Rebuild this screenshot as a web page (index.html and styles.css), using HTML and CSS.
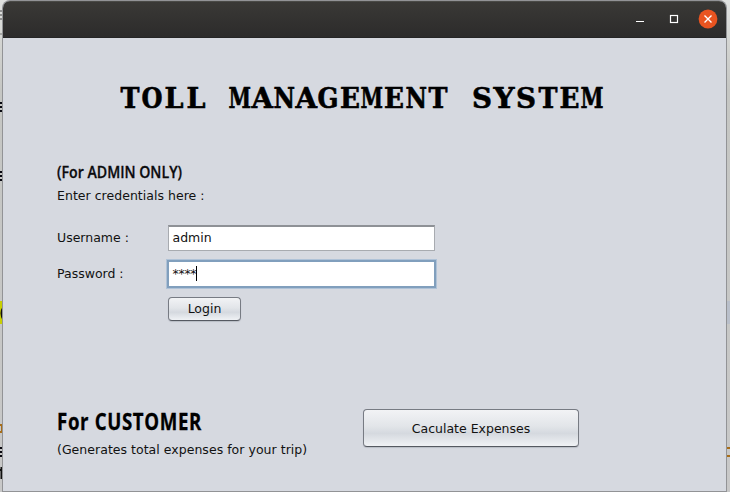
FILE: index.html
```
<!DOCTYPE html>
<html lang="en">
<head>
<meta charset="utf-8">
<title>Toll Management System</title>
<link rel="stylesheet" href="styles.css">
</head>
<body>
<div class="desktop">
  <svg class="behind" width="730" height="492" aria-hidden="true">
    <rect x="0" y="301" width="4" height="23" fill="#c8cf00"/>
    <rect x="726" y="301" width="4" height="23" fill="#b9bfca"/>
    <path d="M0 11H3M0 15H3M0 19H3" stroke="#777" stroke-width="1.3"/>
    <path d="M0 34H3" stroke="#777"/>
    <path d="M0 103H3M0 107H3M0 111H3M0 172H3M0 176H3M0 180H3M0 448H3M0 452H3M0 456H3" stroke="#080810" stroke-width="2"/>
    <path d="M4 307Q0 313 4 320" fill="none" stroke="#111" stroke-width="3"/>
    <path d="M0 425H2V432H0M730 448H726M730 456H726" fill="none" stroke="#a86d18" stroke-width="2"/>
    <path d="M1.5 467V479M0 470H3" stroke="#111" stroke-width="2"/>
  </svg>
  <main class="window">
    <header class="titlebar">
      <svg width="90" height="37" viewBox="0 0 90 37" fill="none">
        <path d="M3 20.5H11" stroke="#fff" stroke-width="1.2"/>
        <rect x="37.5" y="14.5" width="7" height="7" stroke="#fff" stroke-width="1.2"/>
        <circle cx="75" cy="18" r="9.4" fill="#e95420"/>
        <path d="M71.5 14.5L78.5 21.5M78.5 14.5L71.5 21.5" stroke="#fff" stroke-width="1.4"/>
      </svg>
    </header>
    <section class="content">
      <h1><svg width="500" height="40"><text class="title" y="32.5"><tspan x="0.5" textLength="19" lengthAdjust="spacingAndGlyphs">T</tspan><tspan x="21.5" textLength="21" lengthAdjust="spacingAndGlyphs">O</tspan><tspan x="44.5" textLength="19" lengthAdjust="spacingAndGlyphs">L</tspan><tspan x="66.5" textLength="19" lengthAdjust="spacingAndGlyphs">L</tspan> <tspan x="108.5" textLength="22.5" lengthAdjust="spacingAndGlyphs">M</tspan><tspan x="131.5" textLength="21.5" lengthAdjust="spacingAndGlyphs">A</tspan><tspan x="153.5" textLength="21.5" lengthAdjust="spacingAndGlyphs">N</tspan><tspan x="175.5" textLength="21.5" lengthAdjust="spacingAndGlyphs">A</tspan><tspan x="197.5" textLength="21" lengthAdjust="spacingAndGlyphs">G</tspan><tspan x="220" textLength="20" lengthAdjust="spacingAndGlyphs">E</tspan><tspan x="240.5" textLength="22.5" lengthAdjust="spacingAndGlyphs">M</tspan><tspan x="264" textLength="20" lengthAdjust="spacingAndGlyphs">E</tspan><tspan x="285.5" textLength="21.5" lengthAdjust="spacingAndGlyphs">N</tspan><tspan x="308.5" textLength="19" lengthAdjust="spacingAndGlyphs">T</tspan> <tspan x="352" textLength="20" lengthAdjust="spacingAndGlyphs">S</tspan><tspan x="373.5" textLength="21" lengthAdjust="spacingAndGlyphs">Y</tspan><tspan x="396" textLength="20" lengthAdjust="spacingAndGlyphs">S</tspan><tspan x="418.5" textLength="19" lengthAdjust="spacingAndGlyphs">T</tspan><tspan x="439.5" textLength="20" lengthAdjust="spacingAndGlyphs">E</tspan><tspan x="460.5" textLength="23" lengthAdjust="spacingAndGlyphs">M</tspan></text></svg></h1>
      <div class="admin">
        <h2><svg width="200" height="26"><text class="sub" x="0" y="19" textLength="125" lengthAdjust="spacingAndGlyphs">(For ADMIN ONLY)</text></svg></h2>
        <p class="intro">Enter credentials here :</p>
        <form class="fields">
          <span>Username :</span><div class="field">admin</div>
          <span>Password :</span><div class="field focused"><span class="stars">****</span><i class="caret"></i></div>
          <button class="login" type="button">Login</button>
        </form>
      </div>
      <div class="customer">
        <div>
          <h2><svg width="220" height="34"><text class="large" x="0" y="26" textLength="145" lengthAdjust="spacingAndGlyphs">For CUSTOMER</text></svg></h2>
          <p class="note">(Generates total expenses for your trip)</p>
        </div>
        <button class="calculate" type="button">Caculate Expenses</button>
      </div>
    </section>
  </main>
</div>
</body>
</html>
```
FILE: styles.css
```
* { box-sizing: border-box; }
body { margin: 0; font: 12.5px/18px "DejaVu Sans", sans-serif; color: #111; }
.desktop { position: relative; width: 730px; height: 492px; padding: 1px 3px; overflow: hidden; background: linear-gradient(#e0e1df 0, #c5c6c3 90px, #c8c8c8); }
.behind { position: absolute; left: 0; top: 0; }
.window { position: relative; width: 723px; height: 490px; background: #d6d9e0; border-radius: 7px 7px 0 0; overflow: hidden; box-shadow: 0 0 0 1px #929396; }
.titlebar { height: 37px; padding-right: 3px; display: flex; justify-content: flex-end; background: linear-gradient(#3a3936, #2c2b2b); border-top: 1px solid #4a4a46; border-bottom: 1px solid #252526; }
.titlebar svg { margin-top: -1px; }
.content { padding: 37px 54px 0; }
h1, h2, p { margin: 0; }
h1 svg, h2 svg { display: block; }
h1 { height: 40px; padding-left: 63px; }
.title { font: bold 27px "DejaVu Serif", serif; fill: #000; stroke: #000; stroke-width: .6px; }
.sub { font: 600 17px "Open Sans", sans-serif; fill: #0b0b0d; stroke: #0b0b0d; stroke-width: .3px; }
.large { font: bold 23px "Open Sans", sans-serif; letter-spacing: .8px; fill: #000; stroke: #000; stroke-width: .3px; }
.admin { padding-top: 44px; }
.admin h2 { height: 28px; }
.intro, .note { letter-spacing: .03px; }
.fields { display: grid; grid-template-columns: 111px 268px; grid-template-rows: 26px 28px 24px; row-gap: 9px; margin-top: 20px; align-items: center; }
.field { height: 26px; width: 267px; padding: 2px 3.5px; background: #fff; border: 1px solid #a8abb0; border-top: 2px solid #8e9196; display: flex; line-height: 18px; }
.focused { width: 269px; height: 28px; margin-left: -1px; border: 2px solid #819fbd; box-shadow: 0 0 0 1px #afc2d7; padding: 3px 3.5px; }
.stars { letter-spacing: -.3px; }
.caret { width: 1px; height: 15px; margin-top: 1px; background: #000; }
button { font: inherit; color: #111; padding: 0; border: 1px solid #777b83; border-bottom-color: #555961; border-radius: 4px; background: linear-gradient(#f2f3f5, #e2e5e9 45%, #d5d9df 65%, #f0f2f5); box-shadow: 0 1px 1px #b9bdc5; }
.login { grid-column: 2; width: 73px; height: 24px; }
.customer { display: grid; grid-template-columns: 306px 216px; margin-top: 83px; align-items: start; }
.customer h2 { height: 37px; }
.calculate { height: 38px; margin-top: 5px; padding-top: 2px; }
```
